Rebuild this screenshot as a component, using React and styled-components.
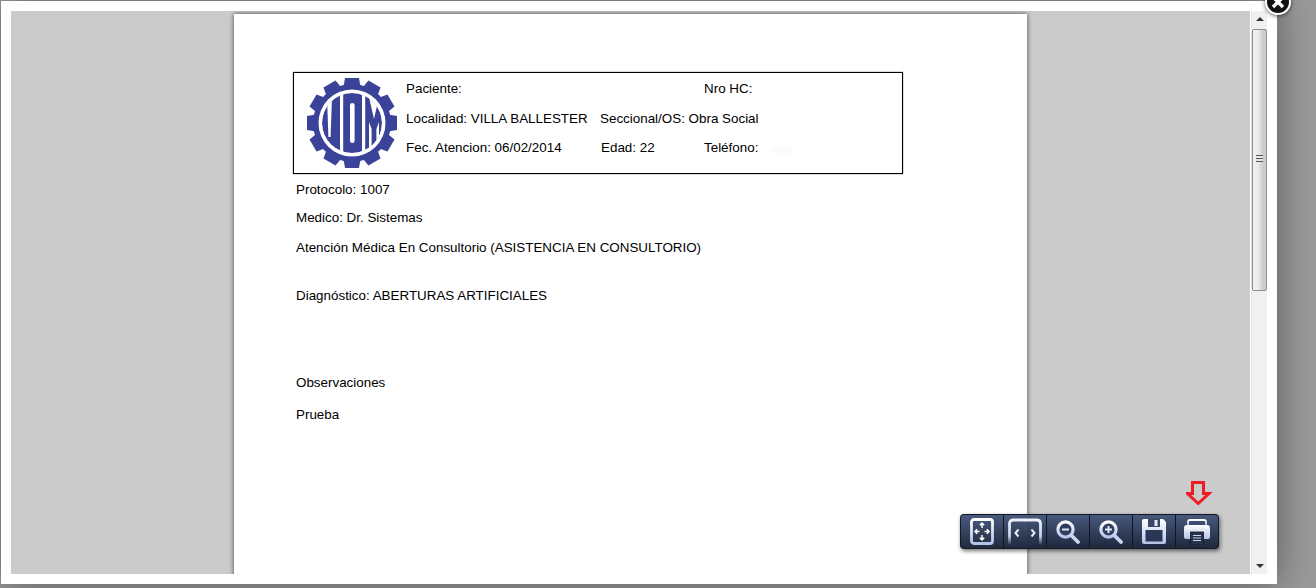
import styled, { createGlobalStyle } from "styled-components";

const Global = createGlobalStyle`
	html, body {
		margin: 0;
		height: 588px;
		overflow: hidden;
		background: #9a9a9a;
	}
`

const Backdrop = styled.div`
	position: relative;
	width: 1316px;
	height: 588px;
	padding: 1px 39px 4px 1px;
	box-sizing: border-box;
	overflow: hidden;
	font-family: "Liberation Sans", Arial, sans-serif;
`

const Modal = styled.div`
	position: relative;
	height: 100%;
	padding: 10px;
	box-sizing: border-box;
	background: #fff;
	box-shadow: 0 0 36px rgba(0, 0, 0, 0.42);
`

const Viewer = styled.div`
	position: relative;
	display: flex;
	height: 100%;
	overflow: hidden;
`

const PageArea = styled.div`
	flex: 1;
	display: flex;
	justify-content: center;
	padding-top: 3px;
	background: #cbcbcb;
	overflow: hidden;
`

const Sheet = styled.div`
	width: 793px;
	height: 1120px;
	flex: none;
	box-sizing: border-box;
	padding: 58px 0 0 59px;
	background: #fff;
	box-shadow: 0 0 5px rgba(0, 0, 0, 0.65);
	color: #000;
	font-size: 13.4px;
`

const HeaderBox = styled.div`
	display: flex;
	width: 610px;
	height: 102px;
	box-sizing: border-box;
	border: 1px solid #000;
	box-shadow: 0 0 1px rgba(0, 0, 0, 0.8);
	padding: 0 0 0 12px;
`

const LogoSlot = styled.div`
	width: 100px;
	flex: none;
	padding-top: 4px;
`

const HeaderRows = styled.div`
	flex: 1;
	padding-top: 1px;
`

const HeaderRow = styled.div`
	display: flex;
	align-items: center;
	height: 29.5px;
`

const HeaderCell = styled.div`
	width: ${(p) => p.$w}px;
	flex: none;
	white-space: nowrap;
`

const Smudge = styled.span`
	display: inline-block;
	width: 20px;
	height: 4px;
	margin-left: 14px;
	background: #f7f7f7;
	filter: blur(2px);
`

const Line = styled.div`
	margin: ${(p) => p.$top}px 0 0 3px;
	height: 15px;
	line-height: 15px;
	white-space: nowrap;
`

const Scrollbar = styled.div`
	position: relative;
	width: 16px;
	margin-left: 1px;
	background: #f0f0f0;
	border-left: 1px solid #e4e4e4;
	box-sizing: border-box;
`

const ScrollArrow = styled.div`
	position: absolute;
	left: 4px;
	${(p) => (p.$up ? "top: 6px;" : "bottom: 6px;")}
	width: 0;
	height: 0;
	border-left: 4px solid transparent;
	border-right: 4px solid transparent;
	${(p) => (p.$up ? "border-bottom: 4px solid #333;" : "border-top: 4px solid #333;")}
`

const Thumb = styled.div`
	position: absolute;
	top: 18px;
	left: 0;
	width: 15px;
	height: 262px;
	box-sizing: border-box;
	border: 1px solid #8d8d8d;
	border-radius: 2px;
	background: linear-gradient(to right, #f2f2f2 0%, #ececec 35%, #c8c8cc 85%, #d4d4d8 100%);
`

const Grip = styled.div`
	position: absolute;
	top: 125px;
	left: 3px;
	width: 7px;
	height: 7px;
	background: repeating-linear-gradient(to bottom, #555 0, #555 1px, #e6e6e6 1px, #e6e6e6 3px);
`

const Toolbar = styled.div`
	position: absolute;
	left: 949px;
	top: 503px;
	display: flex;
	width: 259px;
	height: 35px;
	border: 1px solid rgba(15, 20, 32, 0.9);
	box-sizing: border-box;
	border-radius: 4px;
	overflow: hidden;
	background: linear-gradient(to bottom, rgba(66, 84, 122, 0.96), rgba(24, 33, 54, 0.96));
	box-shadow: 1px 2px 4px rgba(0, 0, 0, 0.55);
`

const ToolButton = styled.div`
	flex: 1;
	display: flex;
	align-items: center;
	justify-content: center;
	border-left: ${(p) => (p.$first ? "none" : "1px solid #10151f")};
`

const ArrowMark = styled.svg`
	position: absolute;
	left: 1175px;
	top: 470px;
`

const CloseButton = styled.svg`
	position: absolute;
	left: 1263px;
	top: -13px;
	filter: drop-shadow(0 1px 2px rgba(0, 0, 0, 0.6));
`

const IconDefs = () => (
	<svg width="0" height="0" style={{ position: "absolute" }}>
		<defs>
			<linearGradient id="ic" x1="0" y1="0" x2="0" y2="1">
				<stop offset="0" stopColor="#ffffff" />
				<stop offset="1" stopColor="#b4c2ea" />
			</linearGradient>
			<linearGradient id="fade" x1="0" y1="0" x2="0" y2="1">
				<stop offset="0" stopColor="#eef2fb" />
				<stop offset="0.65" stopColor="#c4d0ee" />
				<stop offset="1" stopColor="#c4d0ee" stopOpacity="0" />
			</linearGradient>
			<clipPath id="logoDisc">
				<circle cx="46" cy="46" r="30" />
			</clipPath>
		</defs>
	</svg>
)

const FitPage = () => (
	<svg width="24" height="27" viewBox="0 0 24 27">
		<rect x="1.5" y="1.5" width="21" height="24" rx="2.5" fill="none" stroke="url(#ic)" strokeWidth="2.8" />
		<g fill="none" stroke="#fff" strokeWidth="1.5">
			<path d="M12 5v5M9.8 7.2L12 5l2.2 2.2" />
			<path d="M12 17v5M9.8 19.8L12 22l2.2-2.2" />
			<path d="M5 13.5h4.5M7.2 11.3L5 13.5l2.2 2.2" />
			<path d="M14.5 13.5H19M16.8 11.3l2.2 2.2-2.2 2.2" />
		</g>
	</svg>
)

const FitWidth = () => (
	<svg width="34" height="27" viewBox="0 0 34 27">
		<path d="M1.5 27V6q0-4 4-4h23q4 0 4 4v21" fill="none" stroke="url(#fade)" strokeWidth="2.8" />
		<path d="M10.5 11.5l-3 3.5 3 3.5M23.5 11.5l3 3.5-3 3.5" fill="none" stroke="#e6ecfa" strokeWidth="2" />
	</svg>
)

const Magnifier = ({ plus }) => (
	<svg width="24" height="24" viewBox="0 0 24 24">
		<circle cx="9.5" cy="9.5" r="7.6" fill="#2f3c5d" stroke="url(#ic)" strokeWidth="3.2" />
		<path d="M15.5 15.5l6.5 6.5" stroke="#c9d4f0" strokeWidth="3.8" strokeLinecap="round" />
		<path d="M6 9.5h7" stroke="#dfe6f7" strokeWidth="2" />
		{plus && <path d="M9.5 6v7" stroke="#dfe6f7" strokeWidth="2" />}
	</svg>
)

const SaveIcon = () => (
	<svg width="24" height="25" viewBox="0 0 24 25">
		<path d="M2 0h19l3 3v20a2 2 0 0 1-2 2H2a2 2 0 0 1-2-2V2a2 2 0 0 1 2-2z" fill="url(#ic)" />
		<rect x="3.5" y="11" width="17" height="11.5" fill="#2a3656" />
		<rect x="6" y="0" width="12" height="8" fill="#3a4868" />
		<rect x="12.5" y="1" width="3" height="6" fill="#e6ecfa" />
	</svg>
)

const PrintIcon = () => (
	<svg width="26" height="26" viewBox="0 0 26 26">
		<path d="M4 6V3q0-2 2-2h14q2 0 2 2v3" fill="none" stroke="url(#ic)" strokeWidth="1.8" />
		<path d="M3 6h20q3 0 3 3v9q0 2-2 2H2q-2 0-2-2V9q0-3 3-3z" fill="url(#ic)" />
		<rect x="6.5" y="13" width="13" height="13" fill="#27324d" stroke="#0f1420" strokeWidth="0.8" />
		<path d="M9 16.5h8M9 19h8M9 21.5h8" stroke="#c8d3ef" strokeWidth="1" />
	</svg>
)

const UomLogo = () => {
	const teeth = Array.from({ length: 12 }, (_, i) => i * 30);
	return (
		<svg width="92" height="92" viewBox="0 0 92 92">
			<g fill="#3a4398">
				{teeth.map((a) => (
					<path key={a} d="M39 1h14l2 12H37z" transform={`rotate(${a} 46 46)`} />
				))}
				<circle cx="46" cy="46" r="39" />
			</g>
			<circle cx="46" cy="46" r="33.5" fill="#fff" />
			<g clipPath="url(#logoDisc)">
				<circle cx="46" cy="46" r="30" fill="#3a4398" />
				<g fill="#fff">
					<path d="M34 14h3.2v64H34z" />
					<path d="M56 14h3.2v64H56z" />
					<path d="M21 20h5l-1.4 40h-2.2z" />
					<rect x="44" y="26" width="4.6" height="40" rx="2.3" />
					<path d="M62.5 18h11L68 42z" />
					<path d="M63 45l2.6 7v24H63z" />
					<path d="M73 45l-2.6 7v24H73z" />
				</g>
			</g>
		</svg>
	);
};

export default function App() {
	return (
		<Backdrop>
			<Global />
			<IconDefs />
			<Modal>
				<Viewer>
					<PageArea>
						<Sheet>
							<HeaderBox>
								<LogoSlot>
									<UomLogo />
								</LogoSlot>
								<HeaderRows>
									<HeaderRow>
										<HeaderCell $w={298}>Paciente:</HeaderCell>
										<HeaderCell $w={100}>Nro HC:</HeaderCell>
									</HeaderRow>
									<HeaderRow>
										<HeaderCell $w={194}>Localidad: VILLA BALLESTER</HeaderCell>
										<HeaderCell $w={200}>Seccional/OS: Obra Social</HeaderCell>
									</HeaderRow>
									<HeaderRow>
										<HeaderCell $w={195}>Fec. Atencion: 06/02/2014</HeaderCell>
										<HeaderCell $w={103}>Edad: 22</HeaderCell>
										<HeaderCell $w={100}>Teléfono:<Smudge /></HeaderCell>
									</HeaderRow>
								</HeaderRows>
							</HeaderBox>
							<Line $top={8}>Protocolo: 1007</Line>
							<Line $top={13}>Medico: Dr. Sistemas</Line>
							<Line $top={15}>Atención Médica En Consultorio (ASISTENCIA EN CONSULTORIO)</Line>
							<Line $top={33}>Diagnóstico: ABERTURAS ARTIFICIALES</Line>
							<Line $top={72}>Observaciones</Line>
							<Line $top={17}>Prueba</Line>
						</Sheet>
					</PageArea>
					<Scrollbar>
						<ScrollArrow $up />
						<Thumb>
							<Grip />
						</Thumb>
						<ScrollArrow />
					</Scrollbar>
					<Toolbar>
						<ToolButton $first><FitPage /></ToolButton>
						<ToolButton><FitWidth /></ToolButton>
						<ToolButton><Magnifier /></ToolButton>
						<ToolButton><Magnifier plus /></ToolButton>
						<ToolButton><SaveIcon /></ToolButton>
						<ToolButton><PrintIcon /></ToolButton>
					</Toolbar>
					<ArrowMark width="26" height="26" viewBox="0 0 26 26">
						<path d="M6.5 1.5h11v11h5.5L12.2 22.5 1.5 12.5h5z" fill="none" stroke="#ee1c25" strokeWidth="3" />
					</ArrowMark>
				</Viewer>
				<CloseButton width="28" height="28" viewBox="0 0 28 28">
					<circle cx="14" cy="14" r="12" fill="#111" stroke="#fff" strokeWidth="2" />
					<path d="M9 9l10 10M19 9L9 19" stroke="#fff" strokeWidth="3.4" />
				</CloseButton>
			</Modal>
		</Backdrop>
	);
}
